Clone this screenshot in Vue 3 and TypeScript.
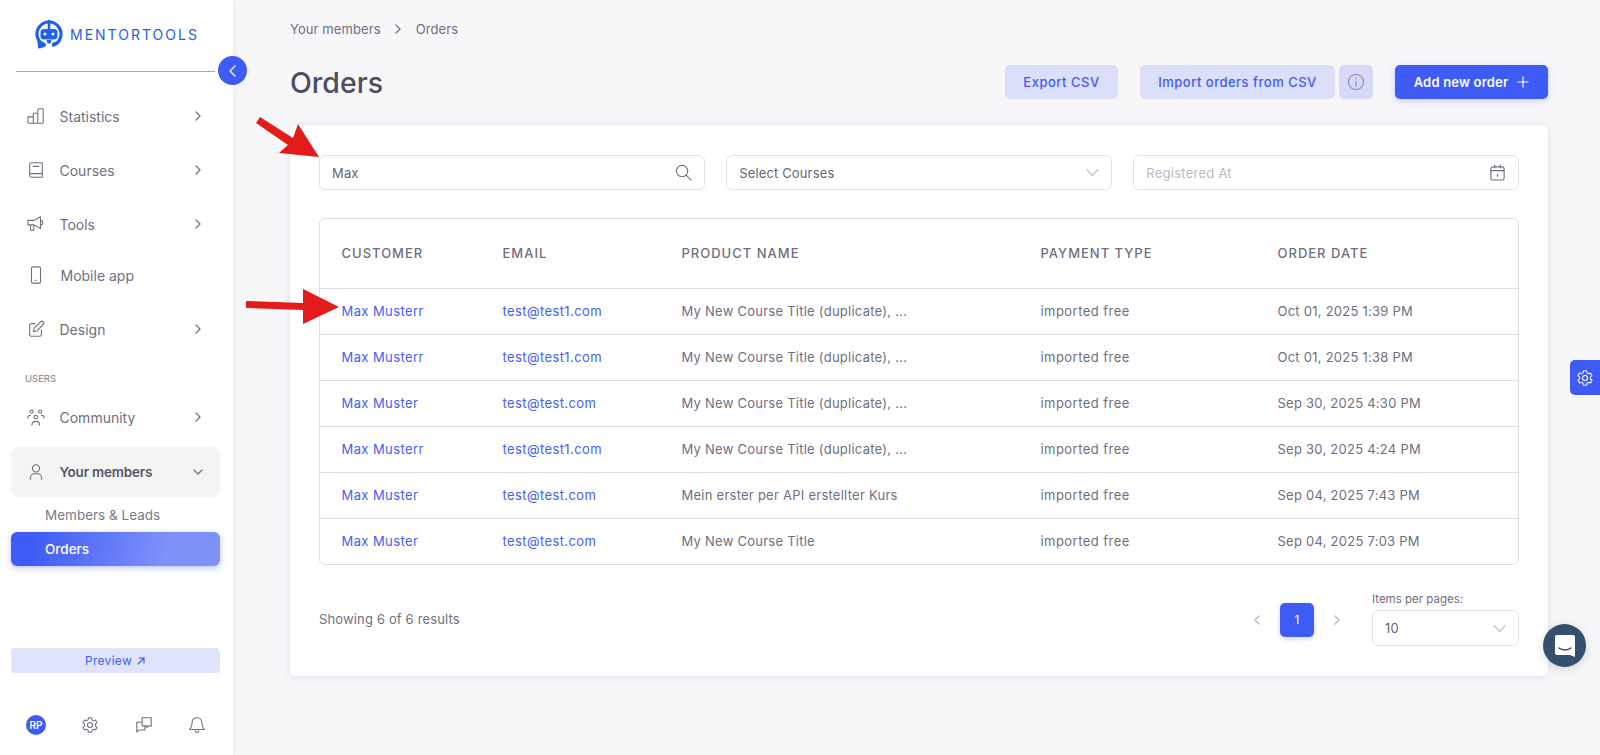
<script setup lang="ts">
const rows = [
  { name: "Max Musterr", email: "test@test1.com", product: "My New Course Title (duplicate), ...", date: "Oct 01, 2025 1:39 PM" },
  { name: "Max Musterr", email: "test@test1.com", product: "My New Course Title (duplicate), ...", date: "Oct 01, 2025 1:38 PM" },
  { name: "Max Muster", email: "test@test.com", product: "My New Course Title (duplicate), ...", date: "Sep 30, 2025 4:30 PM" },
  { name: "Max Musterr", email: "test@test1.com", product: "My New Course Title (duplicate), ...", date: "Sep 30, 2025 4:24 PM" },
  { name: "Max Muster", email: "test@test.com", product: "Mein erster per API erstellter Kurs", date: "Sep 04, 2025 7:43 PM" },
  { name: "Max Muster", email: "test@test.com", product: "My New Course Title", date: "Sep 04, 2025 7:03 PM" },
];
</script>

<template>
  <div class="page">
    <aside class="sidebar">
      <div class="logo">
        <svg width="28" height="29" viewBox="0 0 28 29">
          <path fill="none" stroke="#1d62e8" stroke-width="3.200" d="M10.500 25.500A12 12 0 1 1 17.500 25.500" />
          <path fill="#1d62e8" d="M2.500 19 3 28.500C6.500 28.500 10 27 11.500 24zM16.500 24l1 2.500 4-2-1.500-3z" />
          <rect x="5.500" y="9" width="17" height="10.500" rx="3.500" fill="#1d62e8" />
          <path fill="#1d62e8" d="M12.700 0h2.600v10h-2.600zM11.500 20h5l-1 3.500h-3z" />
          <circle cx="10" cy="14" r="1.500" fill="#fff" />
          <circle cx="18" cy="14" r="1.500" fill="#fff" />
        </svg>
        <span>MENTORTOOLS</span>
      </div>
      <div class="divider">
        <button class="collapse">
          <svg width="14" height="14" viewBox="0 0 14 14"><path d="M9 2 4 7l5 5" class="line white" /></svg>
        </button>
      </div>

      <nav class="nav">
        <a class="item">
          <svg class="ico" viewBox="0 0 20 20"><path class="line" d="M1 11h6v7H2a1 1 0 0 1-1-1zM7 18V8a1 1 0 0 1 1-1h4v11zM12 18V3a1 1 0 0 1 1-1h4a1 1 0 0 1 1 1v14a1 1 0 0 1-1 1z" /></svg>
          <span>Statistics</span>
          <svg class="chev" viewBox="0 0 10 10"><path class="line" d="m3 1 4 4-4 4" /></svg>
        </a>
        <a class="item">
          <svg class="ico" viewBox="0 0 20 20"><path class="line" d="M3 16V4a2 2 0 0 1 2-2h12v16H5a2 2 0 0 1-2-2 2 2 0 0 1 2-2h12M7 6h6" /></svg>
          <span>Courses</span>
          <svg class="chev" viewBox="0 0 10 10"><path class="line" d="m3 1 4 4-4 4" /></svg>
        </a>
        <a class="item">
          <svg class="ico" viewBox="0 0 20 20"><path class="line" d="M1 6h7l7-4v13l-7-4H1zM4 11v6h3.500v-6M15 6c3.500 0 3.500 5 0 5" /></svg>
          <span>Tools</span>
          <svg class="chev" viewBox="0 0 10 10"><path class="line" d="m3 1 4 4-4 4" /></svg>
        </a>
        <a class="item short">
          <svg class="ico" viewBox="0 0 20 20"><rect class="line" x="5" y="1" width="10" height="18" rx="1.500" /><path class="line" d="M9 16h1" /></svg>
          <span class="mobile">Mobile app</span>
        </a>
        <a class="item">
          <svg class="ico" viewBox="0 0 20 20"><path class="line" d="M9 4H5a2 2 0 0 0-2 2v10a2 2 0 0 0 2 2h9a2 2 0 0 0 2-2v-5M7 13l1-4 7-7a2 2 0 0 1 3 3l-7 7z" /></svg>
          <span>Design</span>
          <svg class="chev" viewBox="0 0 10 10"><path class="line" d="m3 1 4 4-4 4" /></svg>
        </a>
        <div class="section">USERS</div>
        <a class="item community">
          <svg class="ico" viewBox="0 0 20 20"><circle class="line" cx="5" cy="4" r="1.800" /><circle class="line" cx="14.500" cy="4" r="1.800" /><circle class="line" cx="9.800" cy="10" r="2" /><path class="line" d="M1 11c0-2 1-3 3-3M19 11c0-2-1-3-3-3M5.500 19c0-5.500 8.500-5.500 8.500 0" /></svg>
          <span>Community</span>
          <svg class="chev" viewBox="0 0 10 10"><path class="line" d="m3 1 4 4-4 4" /></svg>
        </a>
        <a class="item open">
          <svg class="ico" viewBox="0 0 20 20"><circle class="line" cx="10" cy="6" r="4" /><path class="line" d="M4 18v-2a4 4 0 0 1 4-4h4a4 4 0 0 1 4 4v2" /></svg>
          <span>Your members</span>
          <svg class="chev" viewBox="0 0 10 10"><path class="line" d="m1 3 4 4 4-4" /></svg>
        </a>
        <a class="sub">Members &amp; Leads</a>
        <a class="sub active">Orders</a>
      </nav>

      <div class="spacer"></div>
      <button class="preview">
        Preview
        <svg width="10" height="10" viewBox="0 0 10 10"><path class="line blue" d="M2 8 8 2M3 2h5v5" /></svg>
      </button>
      <div class="tools">
        <span class="avatar">RP</span>
        <svg class="tool" viewBox="0 0 20 20"><circle class="line" cx="10" cy="10" r="2.800" /><path class="line" d="M8.300 2h3.400l.5 2.300 1.600.9 2.300-.7 1.700 2.900-1.800 1.600v2l1.800 1.600-1.700 2.900-2.300-.7-1.600.9-.5 2.300H8.300l-.5-2.300-1.600-.9-2.300.7-1.700-2.900L4 11V9L2.200 7.400l1.700-2.900 2.300.7 1.600-.9z" /></svg>
        <svg class="tool" viewBox="0 0 20 20"><path class="line" d="M8 2h10v9h-3l-2 2v-2H8zM8 7H2v11l2.500-2.500H11V11" /></svg>
        <svg class="tool" viewBox="0 0 20 20"><path class="line" d="M10 2c-3.500 0-5.500 2.500-5.500 6 0 4-2 6-2.500 7h16c-.5-1-2.500-3-2.500-7 0-3.500-2-6-5.500-6zM8 16.500c0 2.500 4 2.500 4 0" /></svg>
      </div>
    </aside>

    <main class="main">
      <div class="crumbs">
        <span>Your members</span>
        <svg width="10" height="10" viewBox="0 0 10 10"><path class="line" d="m3 1 4 4-4 4" /></svg>
        <span>Orders</span>
      </div>
      <div class="head">
        <h1>Orders</h1>
        <button class="soft export">Export CSV</button>
        <button class="soft import">Import orders from CSV</button>
        <button class="soft info">
          <svg width="18" height="18" viewBox="0 0 18 18"><circle class="line muted" cx="9" cy="9" r="7.500" /><path class="line muted" d="M9 8v5M9 5v1" /></svg>
        </button>
        <button class="primary">
          Add new order
          <svg width="12" height="12" viewBox="0 0 12 12"><path class="line white" d="M6 1v10M1 6h10" /></svg>
        </button>
      </div>

      <section class="card">
        <div class="filters">
          <div class="field">
            <span>Max</span>
            <svg class="field-ico" viewBox="0 0 18 18"><circle class="line" cx="7.500" cy="7.500" r="6" /><path class="line" d="m12 12 5 5" /></svg>
          </div>
          <div class="field">
            <span>Select Courses</span>
            <svg class="field-chev" viewBox="0 0 14 14"><path class="line light" d="m1 4 6 6 6-6" /></svg>
          </div>
          <div class="field">
            <span class="placeholder">Registered At</span>
            <svg class="field-ico" viewBox="0 0 18 18"><rect class="line" x="2" y="3" width="14" height="14" rx="2" /><path class="line" d="M2 7h14M6 1v3M12 1v3M9 11v2" /></svg>
          </div>
        </div>

        <div class="table">
          <div class="row heading">
            <div>CUSTOMER</div>
            <div>EMAIL</div>
            <div>PRODUCT NAME</div>
            <div>PAYMENT TYPE</div>
            <div>ORDER DATE</div>
          </div>
          <div v-for="(r, i) in rows" :key="i" class="row">
            <div class="link">{{ r.name }}</div>
            <div class="link">{{ r.email }}</div>
            <div>{{ r.product }}</div>
            <div class="pay">imported free</div>
            <div>{{ r.date }}</div>
          </div>
        </div>

        <div class="foot">
          <span class="count">Showing 6 of 6 results</span>
          <div class="pager">
            <svg width="10" height="10" viewBox="0 0 10 10"><path class="line light" d="M7 1 3 5l4 4" /></svg>
            <span class="page-no">1</span>
            <svg width="10" height="10" viewBox="0 0 10 10"><path class="line light" d="m3 1 4 4-4 4" /></svg>
          </div>
          <div class="per">
            <label>Items per pages:</label>
            <div class="field small">
              <span>10</span>
              <svg class="field-chev" viewBox="0 0 14 14"><path class="line light" d="m1 4 6 6 6-6" /></svg>
            </div>
          </div>
        </div>
      </section>
    </main>

    <!-- annotation arrows drawn on top of the shot -->
    <svg class="arrow one" width="65" height="42" viewBox="0 0 65 42"><path fill="#e31b1b" d="M1 7 5 1 38 22 43 8 64 41 24 37 33 29z" /></svg>
    <svg class="arrow two" width="94" height="36" viewBox="0 0 94 36"><path fill="#e31b1b" d="M0 12 57 14 57 0 93 18 57 35 57 21 0 19z" /></svg>

    <div class="gear-tab">
      <svg width="18" height="18" viewBox="0 0 20 20"><circle class="line white" cx="10" cy="10" r="2.800" /><path class="line white" d="M8.300 2h3.400l.5 2.300 1.600.9 2.300-.7 1.700 2.900-1.800 1.600v2l1.800 1.600-1.700 2.900-2.300-.7-1.600.9-.5 2.300H8.300l-.5-2.300-1.600-.9-2.300.7-1.700-2.900L4 11V9L2.200 7.400l1.700-2.900 2.300.7 1.600-.9z" /></svg>
    </div>
    <div class="chat">
      <svg width="24" height="26" viewBox="0 0 24 26"><path fill="#fff" d="M4 2h16a2 2 0 0 1 2 2v20l-5-2H4a2 2 0 0 1-2-2V4a2 2 0 0 1 2-2z" /><path d="M6 15c3 2.500 9 2.500 12 0" fill="none" stroke="#35506f" stroke-width="1.500" stroke-linecap="round" /></svg>
    </div>
  </div>
</template>

<style>
html, body {
  margin: 0;
  background: #f7f7fa;
}
</style>

<style scoped>
.page {
  position: relative;
  display: flex;
  height: 755px;
  overflow: hidden;
  font-family: Inter, "Liberation Sans", sans-serif;
  font-size: 13px;
  color: #6f6f80;
  background: #f7f7fa;
}

.line {
  fill: none;
  stroke: #70707f;
  stroke-width: 1.200;
  stroke-linecap: round;
  stroke-linejoin: round;
}
.line.white { stroke: #fff; }
.line.blue { stroke: #3f5bf6; }
.line.light { stroke: #b4b4bf; }
.line.muted { stroke: #8f8fa3; }

.sidebar {
  width: 233px;
  flex: none;
  display: flex;
  flex-direction: column;
  box-sizing: border-box;
  background: #fff;
  box-shadow: 1px 0 4px rgba(30, 30, 60, 0.06);
  padding-top: 20px;
}

.logo {
  display: flex;
  align-items: center;
  gap: 7px;
  height: 29px;
  padding-left: 35px;
  color: #1d62e8;
  font-size: 14px;
  letter-spacing: 2px;
  font-weight: 400;
}

.divider {
  position: relative;
  height: 1px;
  margin: 22px 18px 0 16px;
  background: #a6a6b4;
}

.collapse {
  position: absolute;
  right: -32px;
  top: -15px;
  width: 29px;
  height: 29px;
  border: 0;
  padding: 0;
  border-radius: 50%;
  background: #3f5bf6;
  display: flex;
  align-items: center;
  justify-content: center;
}

.nav {
  display: flex;
  flex-direction: column;
  margin-top: 17px;
}

.item {
  display: flex;
  align-items: center;
  height: 54px;
  margin: 0 13px 0 11px;
  padding: 0 16px;
  border-radius: 8px;
  box-sizing: border-box;
  font-size: 14px;
}
.item.short { height: 48px; margin-bottom: 3px; }
.item.community { margin-top: 5px; margin-bottom: 3px; }
.item.open {
  height: 50px;
  background: #f4f4f5;
  font-size: 13.500px;
  font-weight: 600;
  letter-spacing: -0.200px;
  color: #565666;
}
.item span { flex: 1; margin-left: 14.500px; }
.item .mobile { margin-left: 15.500px; }

.ico { width: 18px; height: 18px; flex: none; }
.chev { width: 10px; height: 10px; flex: none; margin-right: 1px; }

.section {
  font-size: 9.500px;
  margin: 17px 0 0 25px;
  height: 12px;
  line-height: 12px;
  color: #7d7d8b;
}

.sub {
  display: flex;
  align-items: center;
  margin: 0 13px 0 11px;
  padding-left: 34px;
  height: 35px;
  font-size: 13.500px;
  color: #7a7a89;
}
.sub.active {
  height: 34px;
  border-radius: 6px;
  background: linear-gradient(100deg, #3f5bf6 10%, #7f92fa 75%);
  box-shadow: 0 2px 6px rgba(63, 91, 246, 0.35);
  color: #fff;
  font-weight: 500;
}

.spacer { flex: 1; }

.preview {
  margin: 0 13px 0 11px;
  height: 25px;
  border: 0;
  border-radius: 4px;
  background: #dfe4fc;
  color: #3f5bf6;
  font: 400 12px Inter, "Liberation Sans", sans-serif;
  letter-spacing: 0.300px;
  display: flex;
  align-items: center;
  justify-content: center;
  gap: 4px;
}

.tools {
  display: flex;
  align-items: center;
  justify-content: space-between;
  padding: 0 27px 0 26px;
  height: 40px;
  margin: 32px 0 10px;
}
.avatar {
  width: 20px;
  height: 20px;
  border-radius: 50%;
  background: #3f5bf6;
  color: #fff;
  font-size: 10px;
  font-weight: 600;
  display: flex;
  align-items: center;
  justify-content: center;
}
.tool { width: 18px; height: 18px; }

.main {
  flex: 1;
  min-width: 0;
  padding: 0 52px 0 57px;
}

.crumbs {
  display: flex;
  align-items: center;
  gap: 12.500px;
  height: 18px;
  margin-top: 20px;
  font-size: 13px;
  letter-spacing: 0.100px;
}

.head {
  display: flex;
  align-items: center;
  height: 36px;
  margin-top: 26px;
}
h1 {
  flex: 1;
  margin: 0;
  font-size: 28.500px;
  font-weight: 500;
  color: #4e4e5f;
}

.soft,
.primary {
  height: 34px;
  border: 0;
  border-radius: 5px;
  padding: 0;
  font: 500 13px Inter, "Liberation Sans", sans-serif;
}
.soft {
  background: #dcdffa;
  color: #3f5bf6;
  letter-spacing: 0.500px;
}
.export { width: 113px; margin-right: 22px; }
.import { width: 195px; }
.info {
  width: 34px;
  margin: 0 22px 0 4px;
  background: #d6d9f8;
  display: flex;
  align-items: center;
  justify-content: center;
}
.primary {
  width: 153px;
  display: flex;
  align-items: center;
  justify-content: center;
  gap: 9px;
  background: #3f5bf6;
  color: #fff;
  font-weight: 600;
  letter-spacing: 0.200px;
  box-shadow: 0 2px 6px rgba(63, 91, 246, 0.25);
}

.card {
  margin-top: 25px;
  height: 551px;
  box-sizing: border-box;
  background: #fff;
  border-radius: 5px;
  box-shadow: 0 1px 6px rgba(40, 40, 70, 0.12);
  padding: 30px 29px 0;
}

.filters {
  display: grid;
  grid-template-columns: repeat(3, 1fr);
  gap: 21.500px;
}
.field {
  display: flex;
  align-items: center;
  justify-content: space-between;
  height: 35px;
  box-sizing: border-box;
  padding: 0 12px;
  border: 1px solid #e2e2e8;
  border-radius: 6px;
  font-size: 13px;
  letter-spacing: 0.150px;
  color: #65657a;
}
.placeholder { color: #b9b9c4; letter-spacing: 0.250px; }
.field-ico { width: 17px; height: 17px; }
.field-chev { width: 13px; height: 13px; }

.table {
  margin-top: 28px;
  border: 1px solid #dcdce2;
  border-radius: 6px;
}
.row {
  display: grid;
  grid-template-columns: 161px 179px 359px 237px 1fr;
  align-items: center;
  height: 46px;
  box-sizing: border-box;
  padding: 0 0 2px 21.500px;
  border-top: 1px solid #dcdce2;
  font-size: 13px;
  letter-spacing: 0.250px;
}
.row.heading {
  height: 69px;
  border-top: 0;
  font-weight: 500;
  letter-spacing: 1px;
}
.link { color: #4560f6; letter-spacing: 0.400px; }
.pay { letter-spacing: 0.450px; }

.foot {
  display: flex;
  align-items: center;
  margin-top: 27px;
}
.count { flex: 1; letter-spacing: 0.150px; }
.pager {
  display: flex;
  align-items: center;
  gap: 18px;
  margin-right: 30px;
  margin-top: 1px;
}
.page-no {
  width: 34px;
  height: 34px;
  border-radius: 5px;
  background: #3f5bf6;
  color: #fff;
  font-size: 12px;
  display: flex;
  align-items: center;
  justify-content: center;
  box-shadow: 0 2px 5px rgba(63, 91, 246, 0.25);
}
.per { width: 147px; }
.per label {
  display: block;
  font-size: 11.500px;
  line-height: 15px;
  margin-bottom: 3px;
}
.field.small { height: 36px; }

.arrow { position: absolute; }
.arrow.one { left: 255px; top: 116px; }
.arrow.two { left: 246px; top: 289px; }

.gear-tab {
  position: absolute;
  right: 0;
  top: 360px;
  width: 30px;
  height: 35px;
  border-radius: 5px 0 0 5px;
  background: #3f5bf6;
  display: flex;
  align-items: center;
  justify-content: center;
}

.chat {
  position: absolute;
  left: 1543px;
  top: 624px;
  width: 43px;
  height: 43px;
  border-radius: 50%;
  background: #35506f;
  box-shadow: 0 2px 10px rgba(0, 0, 0, 0.15);
  display: flex;
  align-items: center;
  justify-content: center;
}
</style>
